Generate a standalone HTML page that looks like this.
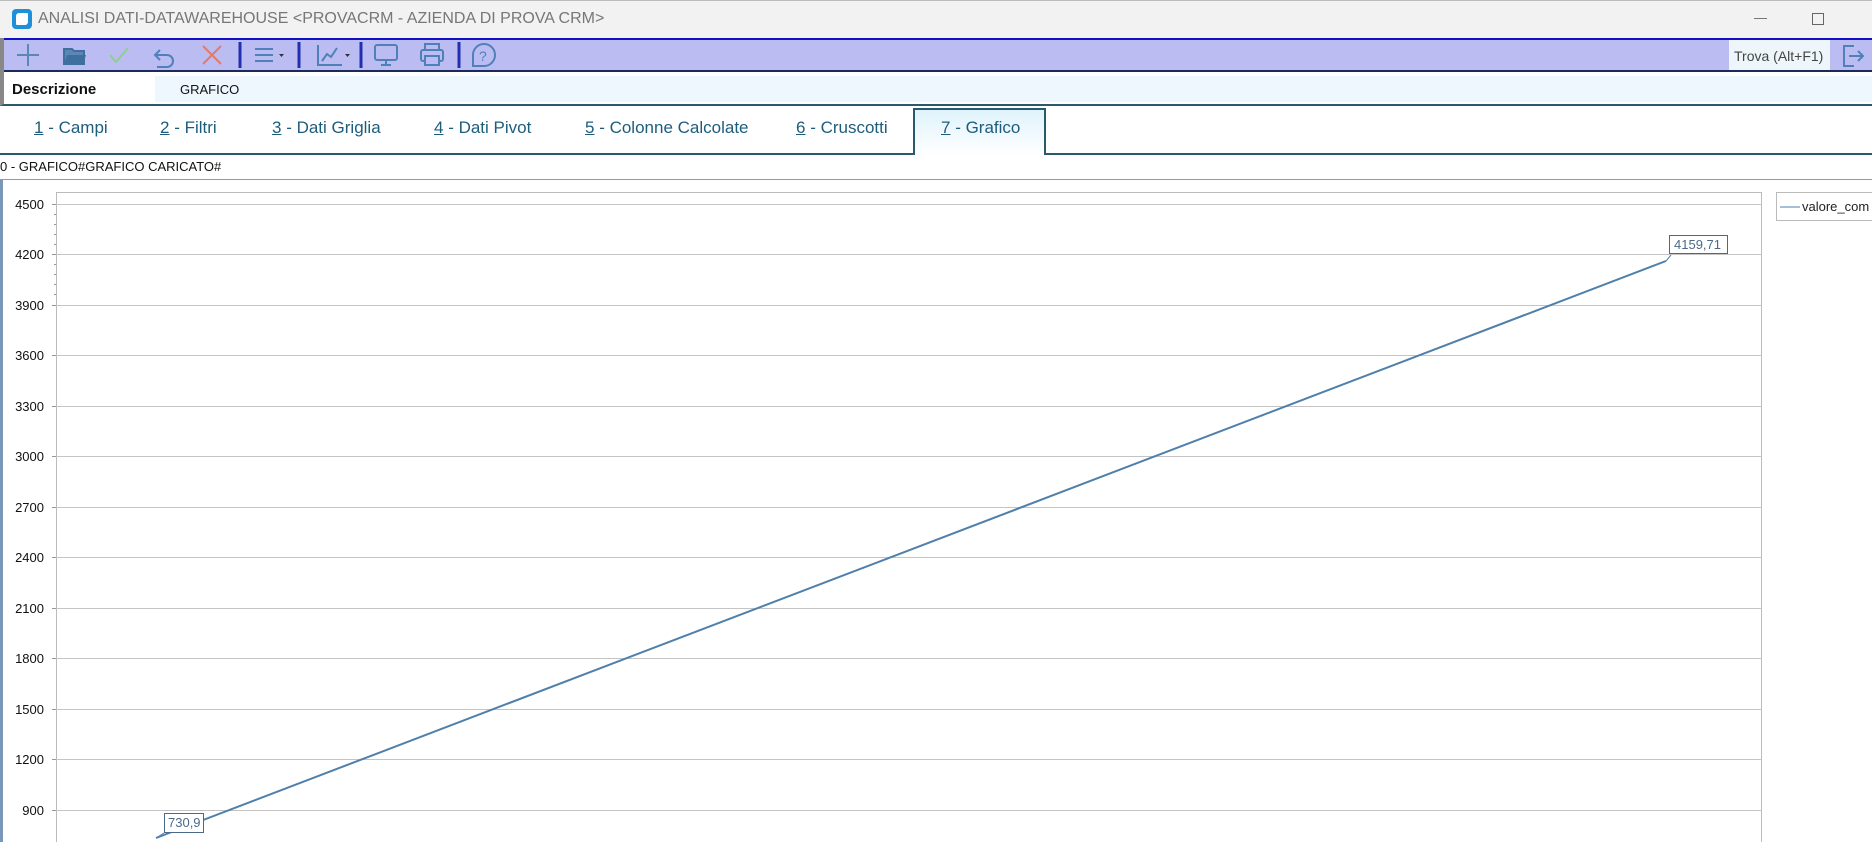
<!DOCTYPE html>
<html><head><meta charset="utf-8"><style>
*{margin:0;padding:0;box-sizing:border-box}
body{width:1872px;height:842px;overflow:hidden;background:#fff;font-family:"Liberation Sans",sans-serif;position:relative}
.a{position:absolute}
.tab{position:absolute;top:118px;font-size:17px;color:#1d5d7c;white-space:nowrap}
.tab u{text-decoration:underline}
</style></head><body>
<div class="a" style="left:0;top:0;width:1872px;height:38px;background:#f2f2f2;border-top:1px solid #bbb"></div>
<div class="a" style="left:12px;top:9px;width:20px;height:20px;background:#1e8fd8;border-radius:4px"></div>
<div class="a" style="left:16px;top:13px;width:12px;height:12px;background:#fff;border-radius:3px 1px 3px 1px"></div>
<div class="a" style="left:38px;top:10px;font-size:16px;color:#777">ANALISI DATI-DATAWAREHOUSE &lt;PROVACRM - AZIENDA DI PROVA CRM&gt;</div>
<div class="a" style="left:1754px;top:18px;width:13px;height:1px;background:#777"></div>
<div class="a" style="left:1812px;top:13px;width:12px;height:12px;border:1px solid #666"></div>
<div class="a" style="left:0;top:38px;width:1872px;height:34px;background:#bbbdf2;border-top:2px solid #1010c8;border-bottom:2px solid #1a2a5a"></div>
<div class="a" style="left:0;top:38px;width:4px;height:36px;background:#888"></div>
<svg class="a" style="left:0;top:38px" width="520" height="34" fill="none" stroke-width="2">
<path d="M28 6v22M17 17h22" stroke="#5b86b5"/>
<path d="M64 11h8l2 2h10v13H64z" stroke="#3f6f9f" fill="#5b86b5"/><path d="M64 26l3-9h19l-3 9z" fill="#3f6f9f" stroke="none"/>
<path d="M110 17l6 7 12-14" stroke="#8ecf8e"/>
<path d="M160 12l-5 5 5 5M155 17h12a6 6 0 010 12h-10" stroke="#4f80b8"/>
<path d="M203 8l18 18M221 8l-18 18" stroke="#e07b6a"/>
<path d="M240 4v26" stroke="#2030b0" stroke-width="3"/>
<path d="M255 11h18M255 17h18M255 23h18" stroke="#4f80b8"/><path d="M279 16h5l-2.5 3z" fill="#333" stroke="none"/>
<path d="M299 4v26" stroke="#2030b0" stroke-width="3"/>
<path d="M318 7v20h24M322 23l5-7 4 3 6-9" stroke="#4f80b8"/><path d="M345 16h5l-2.5 3z" fill="#333" stroke="none"/>
<path d="M361 4v26" stroke="#2030b0" stroke-width="3"/>
<rect x="375" y="7" width="22" height="15" rx="2" stroke="#4f80b8"/><path d="M381 27h10M386 22v5" stroke="#4f80b8"/>
<rect x="425" y="6" width="14" height="6" stroke="#4f80b8"/><rect x="421" y="12" width="22" height="11" rx="2" stroke="#4f80b8"/><rect x="425" y="18" width="14" height="9" stroke="#4f80b8" fill="#bbbdf2"/>
<path d="M459 4v26" stroke="#2030b0" stroke-width="3"/>
<path d="M484 6a11 11 0 110 22h-11V17a11 11 0 0111-11z" stroke="#4f80b8"/><text x="479" y="23" font-size="14" fill="#4f80b8" stroke="none" font-family="Liberation Sans">?</text>
</svg>
<div class="a" style="left:1729px;top:40px;width:101px;height:30px;background:#eef6fb;font-size:14px;color:#444;padding:8px 0 0 5px">Trova (Alt+F1)</div>
<svg class="a" style="left:1840px;top:42px" width="32" height="28" fill="none" stroke="#4f80b8" stroke-width="2"><path d="M14 4H4v20h10"/><path d="M9 14h14M18 9l5 5-5 5"/></svg>
<div class="a" style="left:0;top:74px;width:1872px;height:32px;border-left:4px solid #888;border-bottom:2px solid #2a5a6a;background:#fff"></div>
<div class="a" style="left:155px;top:76px;width:1717px;height:26px;background:#eef7fd"></div>
<div class="a" style="left:12px;top:81px;font-size:15px;font-weight:bold;color:#111">Descrizione</div>
<div class="a" style="left:180px;top:82px;font-size:13px;color:#111">GRAFICO</div>
<div class="a" style="left:0;top:153px;width:1872px;height:2px;background:#2a5a6a"></div>
<div class="a" style="left:913px;top:108px;width:133px;height:47px;border:2px solid #2a5a6a;border-bottom:none;background:linear-gradient(#dff3fc,#fff)"></div>
<div class="tab" style="left:34px"><u>1</u> - Campi</div>
<div class="tab" style="left:160px"><u>2</u> - Filtri</div>
<div class="tab" style="left:272px"><u>3</u> - Dati Griglia</div>
<div class="tab" style="left:434px"><u>4</u> - Dati Pivot</div>
<div class="tab" style="left:585px"><u>5</u> - Colonne Calcolate</div>
<div class="tab" style="left:796px"><u>6</u> - Cruscotti</div>
<div class="tab" style="left:941px"><u>7</u> - Grafico</div>
<div class="a" style="left:0;top:159px;font-size:13px;color:#111">0 - GRAFICO#GRAFICO CARICATO#</div>
<div class="a" style="left:0;top:179px;width:1872px;height:1px;background:#999"></div>
<div class="a" style="left:0;top:180px;width:3px;height:662px;background:#7a96b8"></div>
<svg class="a" style="left:0;top:180px" width="1872" height="662" font-family="Liberation Sans" font-size="13">
<rect x="56.5" y="12.5" width="1705" height="660" fill="none" stroke="#bbb"/>
<g stroke="#c4c4c4">
<path d="M56 24.5h1706M56 74.5h1706M56 125.5h1706M56 175.5h1706M56 226.5h1706M56 276.5h1706M56 327.5h1706M56 377.5h1706M56 428.5h1706M56 478.5h1706M56 529.5h1706M56 579.5h1706M56 630.5h1706"/>
</g>
<g stroke="#999"><path d="M52 24.5h4M52 74.5h4M52 125.5h4M52 175.5h4M52 226.5h4M52 276.5h4M52 327.5h4M52 377.5h4M52 428.5h4M52 478.5h4M52 529.5h4M52 579.5h4M52 630.5h4"/>
<path d="M54 34.5h2M54 44.5h2M54 54.5h2M54 64.5h2M54 84.5h2M54 94.5h2M54 104.5h2M54 114.5h2"/></g>
<g fill="#111" text-anchor="end">
<text x="44" y="29">4500</text><text x="44" y="79">4200</text><text x="44" y="130">3900</text><text x="44" y="180">3600</text><text x="44" y="231">3300</text><text x="44" y="281">3000</text><text x="44" y="332">2700</text><text x="44" y="382">2400</text><text x="44" y="433">2100</text><text x="44" y="483">1800</text><text x="44" y="534">1500</text><text x="44" y="584">1200</text><text x="44" y="635">900</text>
</g>
<path d="M156 658L1666 81" stroke="#4f7fab" stroke-width="2"/>
<path d="M156 658l8-5M1666 81l5-6" stroke="#4f7fab" stroke-width="1"/>
<rect x="1669.5" y="55.5" width="58" height="18" fill="#fff" stroke="#4a6a8a"/><text x="1674" y="69" fill="#4a6a8a">4159,71</text>
<rect x="164.5" y="633.5" width="39" height="19" fill="#fff" stroke="#4a6a8a"/><text x="168" y="647" fill="#4a6a8a">730,9</text>
<rect x="1776.5" y="12.5" width="100" height="28" fill="#fff" stroke="#bbb"/>
<path d="M1780 27h20" stroke="#4f7fab"/><text x="1802" y="31" fill="#222">valore_com</text>
</svg>
</body></html>
